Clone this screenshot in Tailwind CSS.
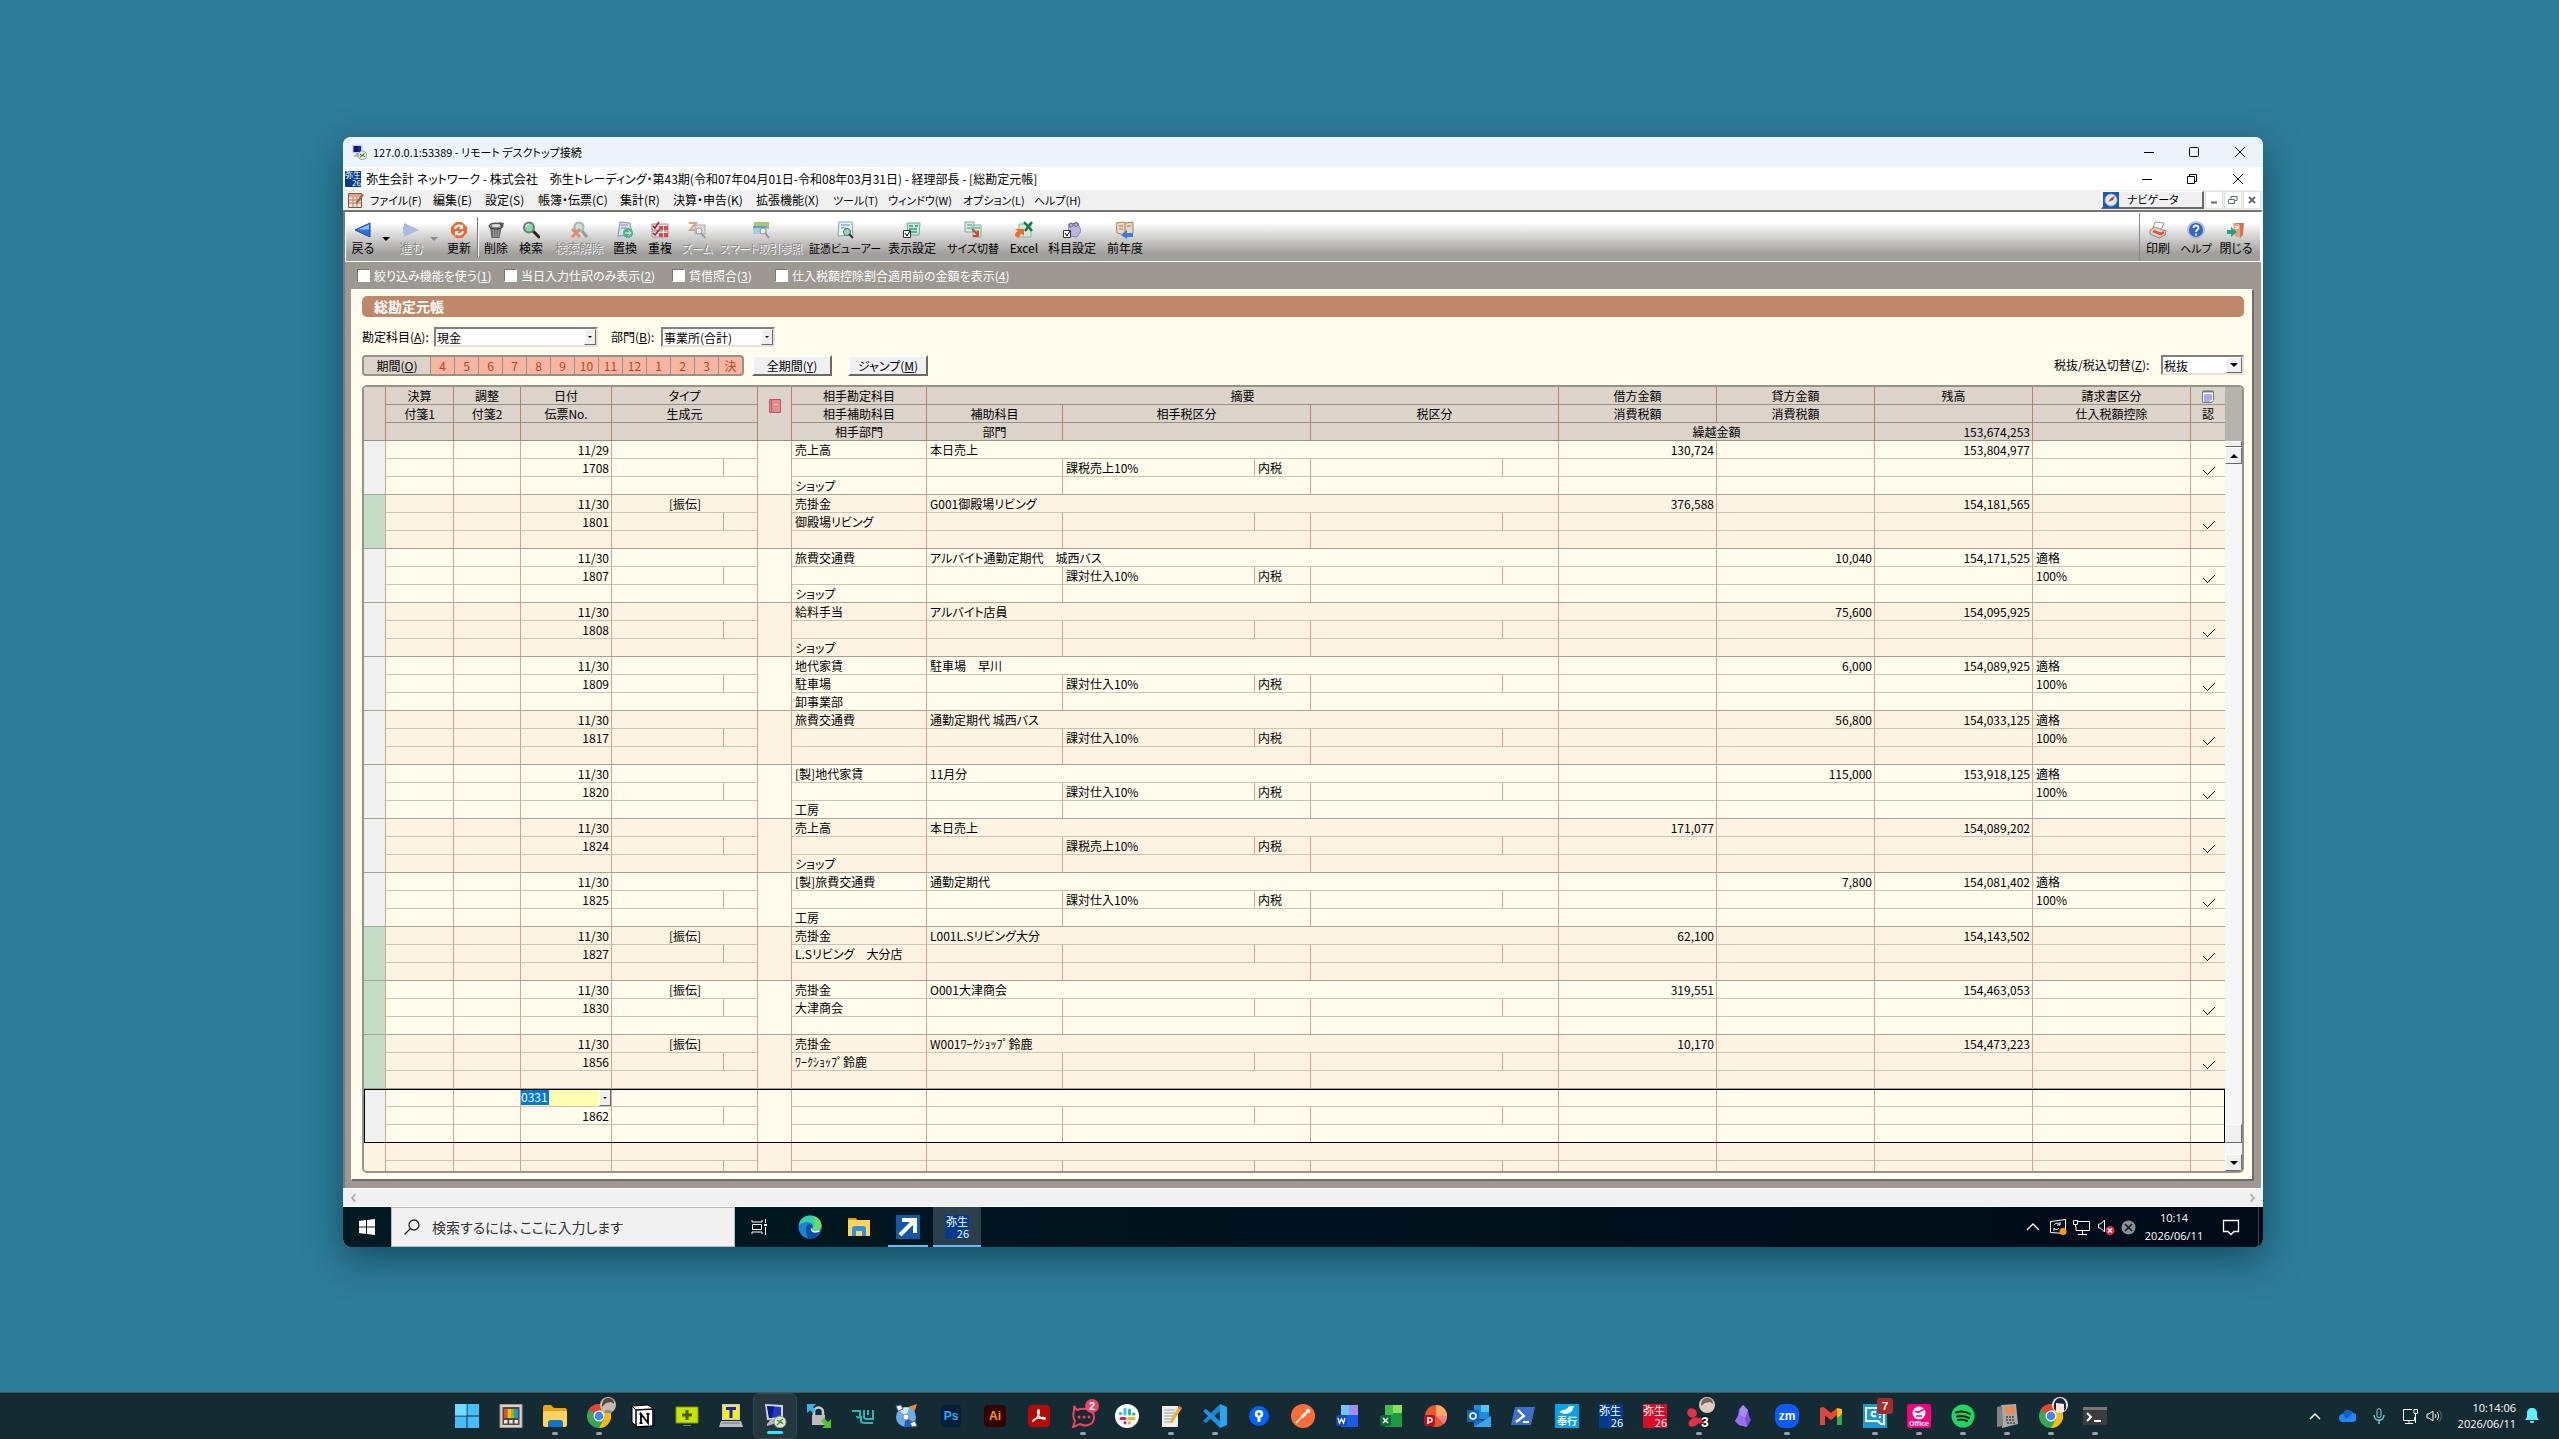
<!DOCTYPE html>
<html lang="ja">
<head>
    <meta charset="UTF-8">
    <meta name="viewport" content="width=device-width, initial-scale=1.0">
    <title>弥生会計 ネットワーク - 総勘定元帳</title>
    <script src="https://cdn.jsdelivr.net/npm/@tailwindcss/browser@4"></script>
</head>
<body class="relative min-h-screen overflow-hidden bg-[#2d7c99] font-['Noto_Sans_CJK_JP',sans-serif] text-[12px] text-black [font-feature-settings:'palt']">

    <!-- Ventana de escritorio remoto -->
    <main class="absolute top-[137px] left-[343px] right-[296px] flex flex-col overflow-hidden rounded-lg bg-[#f0f0f0] shadow-[0_12px_36px_rgba(0,30,45,0.5)]">

        <header class="flex h-[30px] items-center bg-[#ebf4fb] pl-2">
            <svg class="mr-1.5 size-4" viewBox="0 0 24 24"><path d="M2 1h15v13H2z" fill="#c9ccd4"/><path d="M4 3h11v9H4z" fill="#1526b4"/><path d="M4 3h5l3 9H4z" fill="#0a1680"/><path d="M7 14h6v3H7zM4 17h9v2H4z" fill="#a9adb5"/><circle cx="17" cy="17" r="6.500" fill="#e4ead9" stroke="#7d8a75"/><path d="M13.500 15l3 2.500-3 2.500M20.500 14l-3 2.500 3 2.500" fill="none" stroke="#2f9a33" stroke-width="1.700"/></svg>
            <h1 class="flex-1 text-[11px]">127.0.0.1:53389 - リモート デスクトップ接続</h1>
            <button class="flex w-[45px] justify-center" aria-label="最小化"><svg class="size-3" viewBox="0 0 12 12"><path d="M1 6.500h10" stroke="#000"/></svg></button>
            <button class="flex w-[45px] justify-center" aria-label="最大化"><svg class="size-3" viewBox="0 0 12 12"><rect x="1.500" y="1.500" width="9" height="9" rx="1" fill="none" stroke="#000"/></svg></button>
            <button class="flex w-[47px] justify-center" aria-label="閉じる"><svg class="size-3" viewBox="0 0 12 12"><path d="M1 1l10 10M11 1L1 11" stroke="#000"/></svg></button>
        </header>

        <div class="flex h-[23px] items-center bg-white pl-[2px]">
            <span class="mr-[5px] flex size-4 flex-col bg-[#003b8e] text-[8px] leading-[8px] text-white"><span>弥生</span><span class="self-end">26</span></span>
            <h2 class="flex-1">弥生会計 ネットワーク - 株式会社　弥生トレーディング・第43期(令和07年04月01日-令和08年03月31日) - 経理部長 - [総勘定元帳]</h2>
            <button class="flex w-[45px] justify-center" aria-label="最小化"><svg class="size-3" viewBox="0 0 12 12"><path d="M1 6.500h10" stroke="#000"/></svg></button>
            <button class="flex w-[45px] justify-center" aria-label="元に戻す"><svg class="size-3" viewBox="0 0 12 12"><path d="M1.500 3.500h7v7h-7zM3.500 3.500v-2h7v7h-2" fill="none" stroke="#000"/></svg></button>
            <button class="mr-[2px] flex w-[47px] justify-center" aria-label="閉じる"><svg class="size-3" viewBox="0 0 12 12"><path d="M1 1l10 10M11 1L1 11" stroke="#000"/></svg></button>
        </div>

        <div class="flex h-5 items-center pl-[5px]">
            <svg class="mr-[6px] size-4" viewBox="0 0 16 16"><path d="M.500 1.500h13v14H.500z" fill="#f8ded0" stroke="#6f5a50"/><path d="M1 2h12v3H1z" fill="#e2a58c"/><path d="M1 8h12M1 11h12M5 5v10M9 5v10" stroke="#c08070"/><path d="M8 10l6-8 2 1-6 8-2 1z" fill="#8c6a50"/></svg>
            <nav class="flex whitespace-nowrap">
                <button class="w-[63px] text-left text-[11px]">ファイル(F)</button>
                <button class="w-[52px] text-left">編集(E)</button>
                <button class="w-[53px] text-left">設定(S)</button>
                <button class="w-[82px] text-left">帳簿・伝票(C)</button>
                <button class="w-[53px] text-left">集計(R)</button>
                <button class="w-[83px] text-left">決算・申告(K)</button>
                <button class="w-[77px] text-left">拡張機能(X)</button>
                <button class="w-[55px] text-left text-[11px]">ツール(T)</button>
                <button class="w-[75px] text-left text-[11px]">ウィンドウ(W)</button>
                <button class="w-[71px] text-left text-[11px]">オプション(L)</button>
                <button class="text-left text-[11px]">ヘルプ(H)</button>
            </nav>
            <button class="ml-auto flex h-[18px] w-[103px] items-center border border-t-white border-r-2 border-b-2 border-l-white border-r-[#696969] border-b-[#696969] pl-px text-[11px]">
                <svg class="mr-2 size-4" viewBox="0 0 16 16"><path d="M0 0h16v16H0z" fill="#1f57b8"/><circle cx="8" cy="8" r="6" fill="#dfeefb" stroke="#8bb5e6"/><path d="M5 10l3-4 4-2-2 4z" fill="#d93025"/></svg>
                ナビゲータ
            </button>
            <button class="ml-px flex size-[18px] items-center justify-center border border-[#e0e0e0] bg-white" aria-label="最小化"><svg class="size-2" viewBox="0 0 8 8"><path d="M1 6.500h6" stroke="#5b6b7a" stroke-width="2"/></svg></button>
            <button class="ml-px flex size-[18px] items-center justify-center border border-[#e0e0e0] bg-white" aria-label="元に戻す"><svg class="size-2.5" viewBox="0 0 10 10"><path d="M.500 4.500h6v4h-6zM3 4V1.500h6v4H7" fill="none" stroke="#5b6b7a"/></svg></button>
            <button class="mr-[2px] ml-px flex size-[18px] items-center justify-center border border-[#e0e0e0] bg-white" aria-label="閉じる"><svg class="size-2" viewBox="0 0 8 8"><path d="M1 1l6 6M7 1L1 7" stroke="#5b6b7a" stroke-width="2"/></svg></button>
        </div>

        <div class="border-t-2 border-r-2 border-l-2 border-t-[#76746f] border-r-white border-l-[#7c7a76] bg-[#9d9992]">

            <!-- Barra de herramientas -->
            <div class="flex h-[50px] border border-white bg-linear-to-b from-white from-20% via-[#c5c4c3] via-60% to-[#a19f9c] to-85% pl-[3px] leading-[18px] whitespace-nowrap">
                <button class="flex w-7 flex-col items-center pt-2">
                    <svg class="size-[18px]" viewBox="0 0 18 18"><path d="M1 9l15-7v14z" fill="#2f6fe0" stroke="#1b46a0"/><path d="M4 8.500l11-5v5z" fill="#8ec0ff"/></svg>戻る</button>
                <button class="flex w-[18px] justify-center pt-6" aria-label="戻る履歴"><svg class="h-1 w-2" viewBox="0 0 8 4"><path d="M0 0h8L4 4z"/></svg></button>
                <button class="flex w-8 flex-col items-center pt-2 text-[#8c8a88] [text-shadow:1px_1px_0_#fff]">
                    <svg class="size-[18px]" viewBox="0 0 18 18"><path d="M17 9L2 2v3.500H1v7h1V16z" fill="#a9bbdf"/></svg>進む</button>
                <button class="flex w-[14px] justify-center pt-6" aria-label="進む履歴"><svg class="h-1 w-2" viewBox="0 0 8 4"><path d="M0 0h8L4 4z" fill="#8d8d8d"/></svg></button>
                <button class="flex w-9 flex-col items-center pt-2">
                    <svg class="size-[18px]" viewBox="0 0 18 18"><path d="M6 1h6l5 5v6l-5 5H6l-5-5V6z" fill="#ee6a35"/><path d="M5 8a4 4 0 017-2M13 10a4 4 0 01-7 2" fill="none" stroke="#fff" stroke-width="2"/><path d="M13 3v5H9zM5 15v-5h4z" fill="#fff"/></svg>更新</button>
                <span class="my-1 w-[2px] border-l border-[#777] bg-white"></span>
                <button class="flex w-[34px] flex-col items-center pt-2">
                    <svg class="size-[18px]" viewBox="0 0 18 18"><path d="M3 6l1.500 11h8L15 5z" fill="#666"/><path d="M6 8l1 8M9 8v8M12 8l-1 8" stroke="#aaa"/><ellipse cx="9" cy="5" rx="7" ry="3" fill="#888" stroke="#333"/><ellipse cx="9" cy="4.500" rx="4" ry="1.500" fill="#ddd"/><path d="M12 1l5 1-2 5z" fill="#555"/></svg>削除</button>
                <button class="flex w-9 flex-col items-center pt-2">
                    <svg class="size-[18px]" viewBox="0 0 18 18"><path d="M11 10l6 6" stroke="#222" stroke-width="3" stroke-linecap="round"/><circle cx="7" cy="6.500" r="5" fill="#7fd9a8" stroke="#6d7a76" stroke-width="2"/><path d="M4 6a3 3 0 013-3" stroke="#fff" fill="none"/></svg>検索</button>
                <button class="flex w-[60px] flex-col items-center pt-2 text-[#8c8a88] [text-shadow:1px_1px_0_#fff]">
                    <svg class="size-[18px]" viewBox="0 0 18 18"><path d="M12 10l5 6" stroke="#999" stroke-width="3"/><circle cx="9" cy="6" r="4.500" fill="#c7e2d3" stroke="#a9b3ad" stroke-width="2"/><path d="M2 8l8 8M10 8l-8 8" stroke="#e08a7c" stroke-width="3"/></svg>検索解除</button>
                <button class="flex w-8 flex-col items-center pt-2">
                    <svg class="size-[18px]" viewBox="0 0 18 18"><path d="M4 1l10 1 2 12-14 1z" fill="#dcdde8" stroke="#8c8ca0"/><path d="M5 4h7M5 7h6" stroke="#8c84c0"/><circle cx="12" cy="12" r="5" fill="#45b58a"/><path d="M9 12h6M12.500 9.500L15 12l-2.500 2.500" stroke="#fff" fill="none"/></svg>置換</button>
                <button class="flex w-[38px] flex-col items-center pt-2">
                    <svg class="size-[18px]" viewBox="0 0 18 18"><path d="M1 3h16v6H1zM1 10h16v6H1z" fill="#e5e5e5" stroke="#999"/><path d="M8 5h9v4H8zM8 12h9v4H8z" fill="#e0464a"/><path d="M12.500 4v12" stroke="#fff"/><path d="M2 5l2 2 4-6M2 12l2 2 4-5" fill="none" stroke="#b3121b" stroke-width="1.500"/></svg>重複</button>
                <button class="flex w-9 flex-col items-center pt-2 text-[11px] text-[#8c8a88] [text-shadow:1px_1px_0_#fff]">
                    <svg class="size-[18px]" viewBox="0 0 18 18"><path d="M1 2h7L2 9h6" stroke="#e0a08a" stroke-width="2" fill="none"/><path d="M7 4h10v9H7z" fill="#d5dde2" stroke="#aaa"/><circle cx="11" cy="10" r="3" fill="#eee" stroke="#999"/><path d="M13 12l4 5" stroke="#999" stroke-width="2"/></svg>ズーム</button>
                <button class="flex w-[92px] flex-col items-center pt-2 text-[11px] text-[#8c8a88] [text-shadow:1px_1px_0_#fff]">
                    <svg class="size-[18px]" viewBox="0 0 18 18"><path d="M2 1h15v7H2z" fill="#a4c77a"/><path d="M1 5h14v8H1z" fill="#a3cfe0"/><path d="M1 5h14v2H1z" fill="#6fa0bb"/><circle cx="11" cy="10" r="3" fill="#eee" stroke="#999"/><path d="M13 12l4 5" stroke="#a88" stroke-width="2"/></svg>スマート取引参照</button>
                <button class="flex w-[76px] flex-col items-center pt-2 text-[11px]">
                    <svg class="size-[18px]" viewBox="0 0 18 18"><path d="M3 1h13l1 13-15 1z" fill="#e8f1f6" stroke="#8aa0ae"/><path d="M5 4h9M5 7h5" stroke="#4b9ad0"/><circle cx="11" cy="11" r="3.500" fill="#8fe0b0" stroke="#667"/><path d="M13 13l4 4" stroke="#333" stroke-width="2"/></svg>証憑ビューアー</button>
                <button class="flex w-[58px] flex-col items-center pt-2">
                    <svg class="size-[18px]" viewBox="0 0 18 18"><path d="M4 2h13l-1 12H5z" fill="#c9e9dc" stroke="#7aa394"/><path d="M6 5h4M12 5h3M6 8h8M8 11h6" stroke="#2f9a74" stroke-width="1.500"/><path d="M.500 9.500h7v7h-7z" fill="#fff" stroke="#333"/><path d="M2 12l2 3 3-5" fill="none" stroke="#000"/></svg>表示設定</button>
                <button class="flex w-16 flex-col items-center pt-2 text-[11px]">
                    <svg class="size-[18px]" viewBox="0 0 18 18"><path d="M1 1h9v10H1zM9 4h8v12H9z" fill="#d4eee3" stroke="#86a99d"/><path d="M3 4h5M3 7h5M11 7h5M11 10h4" stroke="#2f9a74"/><path d="M8 8l6 6M14 10v5H9" stroke="#d8432f" stroke-width="2" fill="none"/></svg>サイズ切替</button>
                <button class="flex w-[38px] flex-col items-center pt-2">
                    <svg class="size-[18px]" viewBox="0 0 18 18"><path d="M4 3h12v13H4z" fill="#cfeadd" stroke="#8ab3a0"/><path d="M9 1l8 9M17 1l-7 9" stroke="#157a3e" stroke-width="2.500"/><path d="M0 8h9v7l-2-2c-2 0-3 2-3 4L0 15c0-3 1-4 3-5z" fill="#f06a2c" /></svg>Excel</button>
                <button class="flex w-[58px] flex-col items-center pt-2">
                    <svg class="size-[18px]" viewBox="0 0 18 18"><path d="M6 3l9-1 3 8-4 6-9-1z" fill="#b9b5dd" stroke="#8783b0"/><circle cx="8" cy="4" r="2" fill="none" stroke="#666"/><circle cx="13" cy="3.500" r="2" fill="none" stroke="#666"/><path d="M.500 9.500h7v7h-7z" fill="#fff" stroke="#333"/><path d="M2 12l2 3 3-5" fill="none" stroke="#000"/></svg>科目設定</button>
                <button class="flex w-12 flex-col items-center pt-2">
                    <svg class="size-[18px]" viewBox="0 0 18 18"><path d="M0 2l8-1 1 1 8-1v11l-8 2-8-2z" fill="#ead6bd" stroke="#9c8468"/><path d="M9 2v11M3 5h4M3 8h4M11 5h4" stroke="#9c8468"/><path d="M5 14l6-5v3h6v4h-6v2z" fill="#3d78dc"/></svg>前年度</button>
                <div class="ml-auto flex border-l border-[#888] pr-[4px]">
                    <button class="flex w-9 flex-col items-center pt-2">
                        <svg class="size-[18px]" viewBox="0 0 18 18"><path d="M6 1l9 1-3 7-8-2z" fill="#fff" stroke="#999"/><path d="M1 9l5-3 11 4-1 4-6 3-9-4z" fill="#d8d4d0" stroke="#8a8580"/><path d="M4 10l8 3 3-2" stroke="#e2532f" stroke-width="2.500" fill="none"/></svg>印刷</button>
                    <button class="flex w-10 flex-col items-center pt-2 text-[11px]">
                        <svg class="size-[18px]" viewBox="0 0 18 18"><circle cx="9" cy="9" r="8" fill="#3565d2" stroke="#b9bfcc" stroke-width="2"/><path d="M6.500 7a2.500 2.500 0 115 0c0 1.500-2.500 2-2.500 4M9 12.500v2" fill="none" stroke="#fff" stroke-width="1.800"/></svg>ヘルプ</button>
                    <button class="flex w-10 flex-col items-center pt-2">
                        <svg class="size-[18px]" viewBox="0 0 18 18"><path d="M6 2h11l-1 12-3 3V4z" fill="#c97a55"/><path d="M6 2l7 2v13l-5-2z" fill="#e3a481"/><path d="M8 5h4v3H8z" fill="#f5e5d0"/><path d="M0 9h4V6l6 5-6 5v-3H0z" fill="#2aa08c"/></svg>閉じる</button>
                </div>
            </div>

            <!-- Opciones -->
            <div class="flex h-[27px] items-center pl-3 whitespace-nowrap text-white">
                <label class="flex w-[147px] items-center gap-1"><input type="checkbox" class="size-[13px] appearance-none border border-[#777] border-r-white border-b-white bg-white"><span>絞り込み機能を使う(<u>1</u>)</span></label>
                <label class="flex w-[168px] items-center gap-1"><input type="checkbox" class="size-[13px] appearance-none border border-[#777] border-r-white border-b-white bg-white"><span>当日入力仕訳のみ表示(<u>2</u>)</span></label>
                <label class="flex w-[103px] items-center gap-1"><input type="checkbox" class="size-[13px] appearance-none border border-[#777] border-r-white border-b-white bg-white"><span>貸借照合(<u>3</u>)</span></label>
                <label class="flex items-center gap-1"><input type="checkbox" class="size-[13px] appearance-none border border-[#777] border-r-white border-b-white bg-white"><span>仕入税額控除割合適用前の金額を表示(<u>4</u>)</span></label>
            </div>

            <section class="mr-[7px] mb-[7px] ml-[6px] border border-t-white border-r-2 border-b-2 border-l-white border-r-[#6d6c6a] border-b-[#6d6c6a] bg-[#fffcee] pt-[6px] pr-2 pb-[6px] pl-[10px]">
                <h3 class="h-[21px] rounded-[5px] bg-[#c0886a] pl-3 text-[14px] leading-[20px] font-bold text-white">総勘定元帳</h3>

                <div class="mt-[10px] flex h-5 items-center whitespace-nowrap">
                    <label for="kamoku" class="w-[72px]">勘定科目(<u>A</u>):</label>
                    <div class="relative w-[164px]">
                        <select id="kamoku" class="block h-5 w-full appearance-none border-2 border-[#e5e3dc] border-t-[#808080] border-l-[#808080] bg-white pl-px leading-[15px]"><option>現金</option></select>
                        <span class="pointer-events-none absolute inset-y-[2px] right-[2px] flex w-3 items-center justify-center border border-r-[#696969] border-b-[#696969] border-t-white border-l-white bg-[#f0f0f0]"><svg class="h-[2px] w-1" viewBox="0 0 4 2"><path d="M0 0h4L2 2z"/></svg></span>
                    </div>
                    <label for="bumon" class="ml-[13px] w-[50px]">部門(<u>B</u>):</label>
                    <div class="relative w-[114px]">
                        <select id="bumon" class="block h-5 w-full appearance-none border-2 border-[#e5e3dc] border-t-[#808080] border-l-[#808080] bg-white pl-px leading-[15px]"><option>事業所(合計)</option></select>
                        <span class="pointer-events-none absolute inset-y-[2px] right-[2px] flex w-3 items-center justify-center border border-r-[#696969] border-b-[#696969] border-t-white border-l-white bg-[#f0f0f0]"><svg class="h-[2px] w-1" viewBox="0 0 4 2"><path d="M0 0h4L2 2z"/></svg></span>
                    </div>
                </div>

                <div class="mt-2 flex h-[21px] items-stretch whitespace-nowrap">
                    <div id="months" class="flex overflow-hidden rounded-[4px] border-2 border-[#96928a] bg-[#f8b5a1] text-[#b0492c]">
                        <button class="w-[66px] bg-[#dcd4cb] text-black">期間(<u>O</u>)</button>
                    </div>
                    <button class="ml-2 w-20 border-2 border-t-white border-r-[#696969] border-b-[#696969] border-l-white bg-[#f0f0f0] leading-[16px]">全期間(<u>Y</u>)</button>
                    <button class="ml-4 w-20 border-2 border-t-white border-r-[#696969] border-b-[#696969] border-l-white bg-[#f0f0f0] leading-[16px]">ジャンプ(<u>M</u>)</button>
                    <label for="zei" class="ml-auto w-[107px] leading-5">税抜/税込切替(<u>Z</u>):</label>
                    <div class="relative w-[83px]">
                        <select id="zei" class="block h-5 w-full appearance-none border-2 border-[#e5e3dc] border-t-[#808080] border-l-[#808080] bg-white pl-px leading-[15px]"><option>税抜</option></select>
                        <span class="pointer-events-none absolute top-[2px] right-[2px] flex h-4 w-4 items-center justify-center border border-r-[#696969] border-b-[#696969] border-t-white border-l-white bg-[#f0f0f0]"><svg class="h-1 w-2" viewBox="0 0 8 4"><path d="M0 0h8L4 4z"/></svg></span>
                    </div>
                </div>

                <!-- Libro mayor -->
                <div class="mt-[9px] flex overflow-hidden rounded-[5px] border-2 border-[#96928a]">
                    <table class="w-full flex-1 table-fixed border-separate border-spacing-0 whitespace-nowrap">
                        <colgroup>
                            <col class="w-[22px]"><col class="w-[68px]"><col class="w-[67px]"><col class="w-[91px]"><col class="w-[112px]"><col class="w-[34px]"><col class="w-[34px]">
                            <col class="w-[135px]"><col class="w-[136px]"><col><col class="w-[56px]"><col class="w-[192px]"><col class="w-[56px]">
                            <col class="w-[158px]"><col class="w-[158px]"><col class="w-[158px]"><col class="w-[158px]"><col class="w-[34px]">
                        </colgroup>
                        <thead class="bg-[#dcd4cb] [&_th]:h-[18px] [&_th]:border-r [&_th]:border-b [&_th]:border-r-[#ba8070] [&_th]:border-b-[#96928a] [&_th]:p-0 [&_th]:leading-[17px] [&_th]:font-normal [&_th:last-child]:border-r-0">
                            <tr>
                                <th rowspan="3"></th><th>決算</th><th>調整</th><th>日付</th><th colspan="2">タイプ</th>
                                <th rowspan="3"><svg class="mx-auto mb-4 h-[14px] w-3" viewBox="0 0 12 14"><path d="M.500.500h11v13H.500z" fill="#e58a94" stroke="#b05a68"/><path d="M2.500 1v12" stroke="#b05a68"/><path d="M5 5l1 1 1-1 1 1 1-1" stroke="#ffe14a" fill="none"/></svg></th>
                                <th>相手勘定科目</th><th colspan="5">摘要</th><th>借方金額</th><th>貸方金額</th><th>残高</th><th>請求書区分</th>
                                <th><svg class="mx-auto h-[14px] w-3" viewBox="0 0 12 14"><path d="M.500 2.500h11v9l-2 2h-9z" fill="#fff" stroke="#777"/><path d="M2 1v3M4 1v3M6 1v3M8 1v3M10 1v3" stroke="#777"/><path d="M2 6h8M2 8h8M2 10h8M2 12h6" stroke="#5c50e0"/></svg></th>
                            </tr>
                            <tr>
                                <th>付箋1</th><th>付箋2</th><th>伝票No.</th><th colspan="2">生成元</th>
                                <th>相手補助科目</th><th>補助科目</th><th colspan="2">相手税区分</th><th colspan="2">税区分</th><th>消費税額</th><th>消費税額</th><th></th><th>仕入税額控除</th><th>認</th>
                            </tr>
                            <tr>
                                <th></th><th></th><th></th><th colspan="2"></th>
                                <th>相手部門</th><th>部門</th><th colspan="2"></th><th colspan="2"></th><th colspan="2">繰越金額</th><th class="pr-[2px]! text-right">153,674,253</th><th></th><th></th>
                            </tr>
                        </thead>
                    </table>
                    <!-- Barra de desplazamiento vertical -->
                    <div class="flex w-[17px] flex-col bg-[#f6f6f6]">
                        <div class="h-[54px] bg-[#b6b2ad]"></div>
                        <div class="h-[6px] border border-t-white border-r-[#696969] border-b-[#696969] border-l-white bg-[#f0f0f0]"></div>
                        <button class="flex h-[17px] items-center justify-center border border-t-white border-r-[#696969] border-b-[#696969] border-l-white bg-[#f0f0f0]" aria-label="上へ"><svg class="h-1 w-2" viewBox="0 0 8 4"><path d="M0 4h8L4 0z"/></svg></button>
                        <div class="flex-1"></div>
                        <div class="mb-[11px] h-[19px] border border-t-white border-r-[#696969] border-b-[#696969] border-l-white bg-[#f0f0f0]"></div>
                        <button class="flex h-[17px] items-center justify-center border border-t-white border-r-[#696969] border-b-[#696969] border-l-white bg-[#f0f0f0]" aria-label="下へ"><svg class="h-1 w-2" viewBox="0 0 8 4"><path d="M0 0h8L4 4z"/></svg></button>
                    </div>
                </div>
            </section>
        </div>

        <!-- Desplazamiento horizontal -->
        <div class="flex h-[19px] items-center justify-between border-y border-white px-[7px]">
            <svg class="size-2" viewBox="0 0 8 8"><path d="M5.500 0L2 4l3.500 4" fill="none" stroke="#b5b5b5" stroke-width="2"/></svg>
            <svg class="size-2" viewBox="0 0 8 8"><path d="M2.500 0L6 4 2.500 8" fill="none" stroke="#b5b5b5" stroke-width="2"/></svg>
        </div>

        <!-- Barra de tareas remota -->
        <footer class="flex h-10 items-stretch bg-linear-to-r from-[#001a22] to-[#000b18]">
            <button class="flex w-12 items-center justify-center" aria-label="スタート"><svg class="size-4" viewBox="0 0 16 16"><path d="M0 2l7-1v6.500H0zM8 1l8-1v7.500H8zM0 8.500h7V15l-7-1zM8 8.500h8V16l-8-1z" fill="#fff"/></svg></button>
            <label class="flex w-[344px] items-center gap-3 border border-[#bbb] bg-[#f1f1f1] pl-3">
                <svg class="size-4" viewBox="0 0 16 16"><circle cx="10" cy="6" r="5" fill="none" stroke="#222" stroke-width="1.300"/><path d="M6.500 9.500L.500 15.500" stroke="#222" stroke-width="1.300"/></svg>
                <input type="text" placeholder="検索するには、ここに入力します" class="w-[280px] text-[14px] outline-none placeholder:text-[#333]">
            </label>
            <button class="flex w-12 items-center justify-center" aria-label="タスク ビュー"><svg class="size-4" viewBox="0 0 16 16"><path d="M1 1v2h10V1M1 15v-2h10v2M1.500 5.500h9v5h-9zM14.500 0v4M14.500 8v8" fill="none" stroke="#fff"/><path d="M13 5h3v2h-3z" fill="#fff"/></svg></button>
            <button class="flex w-[54px] items-center justify-center" aria-label="Edge"><svg class="size-6" viewBox="0 0 24 24"><circle cx="12" cy="12" r="11.500" fill="#1b84d3"/><path d="M1 10C2 3 8 0 13 .500c7 .500 10.500 6 10.500 10 0 4-3 5.500-6 5.500-3 0-4-1.500-3-3 1-2-.500-6-5-6-4 0-7 2-8.500 3z" fill="#39cfa4"/><path d="M15 1c5 1 8.500 5 8.500 9.500 0 4-3 5.500-6 5.500-2 0-3.500-1-3-2.500 3-3 3-8 .500-12.500z" fill="#63de63"/><path d="M8 15c0-4 2-6 4-6 3 0 3 3 2 4-1 2 1 4 4 4l4-1c-2 5-6 7.500-10 7.500-3 0-4-5-4-8.500z" fill="#0c4fa3"/><path d="M13.500 13.500c-.500 2 1.500 3.500 4 3.500l4-1" fill="none" stroke="#e8f6ff" stroke-width="1.500"/></svg></button>
            <button class="flex w-11 items-center justify-center" aria-label="エクスプローラー"><svg class="size-6" viewBox="0 0 24 24"><path d="M1 3h8l2 3H1z" fill="#e79b0e"/><path d="M1 5h22v16H1z" fill="#ffd35c"/><path d="M5 21v-7c0-2 1-3 3-3h8c2 0 3 1 3 3v7h-4v-5H9v5z" fill="#2f8fe0"/></svg></button>
            <button class="ml-[7px] flex w-10 flex-col items-center justify-end" aria-label="ランチャー"><svg class="mb-[6px] size-6" viewBox="0 0 24 24"><path d="M0 0h24v24H0z" fill="#1557a6"/><path d="M6 5h13v13M18 6L4 20" fill="none" stroke="#fff" stroke-width="4"/></svg><span class="h-[2px] w-full bg-[#6cb8f5]"></span></button>
            <button class="ml-[5px] flex w-12 flex-col items-center justify-end bg-[#2b404a]"><span class="mb-[6px] flex size-6 flex-col bg-[#003b8e] text-[11px] leading-[12px] text-white"><span>弥生</span><span class="self-end">26</span></span><span class="h-[2px] w-full bg-[#6cb8f5]"></span></button>

            <div class="ml-auto flex items-center text-white">
                <svg class="mr-2 h-3 w-4" viewBox="0 0 16 12"><path d="M2 9l6-6 6 6" fill="none" stroke="#fff" stroke-width="1.300"/></svg>
                <svg class="mr-[6px] size-[18px]" viewBox="0 0 18 18"><path d="M1.500 3.500l15-2v14l-15-1z" fill="none" stroke="#fff"/><path d="M5 7c1-2 5-3 6 0M11 4v3H8M10 10c-1 2-4 2-5 0v3" fill="none" stroke="#fff"/><circle cx="14" cy="13.500" r="3.500" fill="#ff9800"/></svg>
                <svg class="mr-[6px] size-[18px]" viewBox="0 0 18 18"><path d="M4 3.500h12.500v9H3v-4M9.500 13v3M5 16.500h9M.500 2.500h4v4h-4zM2.500 7v2" fill="none" stroke="#fff"/></svg>
                <svg class="mr-[6px] size-[18px]" viewBox="0 0 18 18"><path d="M1.500 6h2l4-4v12l-4-4h-2z" fill="none" stroke="#fff"/><circle cx="13" cy="12.500" r="4.500" fill="#d9303a"/><path d="M11 10.500l4 4M15 10.500l-4 4" stroke="#fff" stroke-width="1.300"/></svg>
                <svg class="mr-2 size-[15px]" viewBox="0 0 15 15"><circle cx="7.500" cy="7.500" r="7" fill="#8b9096"/><path d="M4 4l7 7M11 4l-7 7" stroke="#10161d" stroke-width="1.500"/></svg>
                <div class="w-[60px] text-center font-['Open_Sans'] text-[11px] leading-[18px]"><div>10:14</div><div>2026/06/11</div></div>
                <svg class="mx-[18px] size-[18px]" viewBox="0 0 18 18"><path d="M1.500 2.500h15v11H12l-3 3-3-3H1.500z" fill="none" stroke="#fff" stroke-width="1.300"/></svg>
                <span class="mr-1 h-10 w-px bg-[#3b4650]"></span>
            </div>
        </footer>
    </main>

    <!-- Barra de tareas local -->
    <footer class="absolute inset-x-0 bottom-0 flex h-[47px] items-center border-t border-[#41565e] bg-[#152b34]">
        <div class="ml-[445px] flex [&>button]:relative [&>button]:flex [&>button]:h-[46px] [&>button]:w-[44px] [&>button]:items-center [&>button]:justify-center [&>button]:text-white [&>button>i]:absolute [&>button>i]:bottom-[4px] [&>button>i]:h-[3px] [&>button>i]:w-[6px] [&>button>i]:rounded-full [&>button>i]:bg-[#9aa4a8] [&>button>svg]:size-6">
            <button aria-label="スタート"><svg viewBox="0 0 24 24"><path d="M0 0h11.500v11.500H0zM12.500 0H24v11.500H12.500zM0 12.500h11.500V24H0zM12.500 12.500H24V24H12.500z" fill="#45bdfa"/><path d="M0 0h11.500v11.500H0z" fill="#6fdcff"/></svg></button>
            <button aria-label="PowerToys"><svg viewBox="0 0 24 24"><path d="M1 .500h22v23H1z" fill="#d9d2c6" stroke="#a29b90"/><path d="M3.500 3h17v18h-17z" fill="#4d4a45"/><path d="M5 5h3.500v9H5z" fill="#f04a24"/><path d="M8.500 5H12v9H8.500z" fill="#fbbc10"/><path d="M12 5h3.500v9H12z" fill="#7bc618"/><path d="M15.500 5H19v9h-3.500z" fill="#2295e8"/><path d="M5 16h3.500v3.500H5zM10.200 16h3.500v3.500h-3.500zM15.500 16H19v3.500h-3.500z" fill="#e9e5dc"/></svg></button>
            <button aria-label="エクスプローラー"><svg viewBox="0 0 24 24"><path d="M0 3c0-1 1-2 2-2h6l3 3h11c1 0 2 1 2 2v3H0z" fill="#e5a21b"/><path d="M0 8l2-1h20c1 0 2 0 2 2v12c0 1-1 2-2 2H2c-1 0-2-1-2-2z" fill="#ffd45e"/><path d="M5 23v-4c0-2 1-3 3-3h9c2 0 3 1 3 3v4z" fill="#1273c4"/></svg><i></i></button>
            <button aria-label="Chrome"><svg viewBox="0 0 24 24"><circle cx="12" cy="12" r="12" fill="#34a853"/><path d="M12 12L1.600 6A12 12 0 0122.400 6z" fill="#ea4335"/><path d="M12 6h10.400A12 12 0 0112 24l5-9z" fill="#fbbc05"/><circle cx="12" cy="12" r="5.500" fill="#fff"/><circle cx="12" cy="12" r="4.300" fill="#4285f4"/></svg><svg class="absolute top-[4px] left-[23px] size-4!" viewBox="0 0 16 16"><circle cx="8" cy="8" r="8" fill="#c9b8ae"/><path d="M2 10c0-6 2-9 6-9s6 2 6 6l-3-2-5 1z" fill="#54483f"/><path d="M4 16c0-4 8-4 8 0z" fill="#888"/></svg><i></i></button>
            <button aria-label="Notion"><svg viewBox="0 0 24 24"><path d="M1 2l16-1 6 4v17l-17 1-5-5z" fill="#fff" stroke="#000"/><path d="M5 6l17-1v17L5 23z" fill="#fff" stroke="#000" stroke-width="1.500"/><path d="M1 2l4 4" stroke="#000"/><path d="M10 19V10l7 9V10M8.500 10H11M15.500 10h3M8.500 19h3" fill="none" stroke="#000" stroke-width="1.800"/></svg></button>
            <button aria-label="モニター"><svg viewBox="0 0 24 24"><path d="M1 3h22v16H1z" fill="#c6e600" stroke="#81950f"/><path d="M12 6v10M7 11h10" stroke="#4d5a00" stroke-width="3"/><path d="M8 21h8v1H8z" fill="#777"/></svg></button>
            <button aria-label="Tera Term"><svg viewBox="0 0 24 24"><path d="M3 0h18v16H3z" fill="#ccc"/><path d="M4.500 1.500h15v13h-15z" fill="#fff200"/><path d="M7 3h10v3h-3.500v8h-3V6H7z" fill="#1420c8"/><path d="M2 17h20l2 6H0z" fill="#b9bbbd"/><path d="M3 19h18" stroke="#777"/></svg></button>
            <button class="rounded-md border border-[#33474f] bg-[#24373f]" aria-label="リモート デスクトップ"><svg viewBox="0 0 24 24"><path d="M2 0l18 1v14L4 16z" fill="#d0d3da"/><path d="M4 2l14 1v10L6 14z" fill="#2437c4"/><path d="M4 2l7 .500L9 14H6z" fill="#0f1a8c"/><path d="M8 15h6v4l-10 3v-2z" fill="#b3b7bd"/><circle cx="17" cy="18" r="6" fill="#dfe7d2" stroke="#8b957f"/><path d="M14 16l3 2-3 3M20 15l-3 2 3 3" fill="none" stroke="#2f9a33" stroke-width="1.300"/></svg><i class="w-4! bg-[#2ee6ff]!"></i></button>
            <button aria-label="WinSCP"><svg viewBox="0 0 24 24"><path d="M7 11V8a4.500 4.500 0 019 0v3" fill="none" stroke="#ccc" stroke-width="2.500"/><path d="M5 11h13v10H5z" fill="#b9bdc1"/><path d="M0 0h9L6 3l3 3-3 3-3-3-3 3z" fill="#35b4e8"/><path d="M24 24h-9l3-3-4-4 3-3 4 4 3-3z" fill="#55c22c"/></svg></button>
            <button aria-label="ウィジェット"><svg viewBox="0 0 24 24"><path d="M1 7h8v5c0 2-3 2-3 0M13 6v7c0 2 2 2 3 2h6V6M17 6v5M10 12v5c0 2 3 2 4 2h8" fill="none" stroke="#2cb5b5" stroke-width="2"/></svg></button>
            <button aria-label="ディスク"><svg viewBox="0 0 24 24"><path d="M10 4L22 0l-3 9z" fill="#f08a1c"/><circle cx="11" cy="13" r="10" fill="#68aef0"/><path d="M11 13L4 6a10 10 0 0110-2z" fill="#cde8ff"/><path d="M11 13l8 6a10 10 0 01-10 4z" fill="#2460c8"/><circle cx="11" cy="13" r="3" fill="#fff" stroke="#888"/><path d="M1 2l5-1 2 4-5 2zM15 19l5-2 2 5-5 1z" fill="#e8eef5" stroke="#567"/></svg></button>
            <button><span class="flex h-[22px] w-5 items-center justify-center rounded-[4px] bg-[#001e36] text-[12px] font-bold text-[#31a8ff] font-['Liberation_Sans']">Ps</span></button>
            <button><span class="flex size-[22px] items-center justify-center rounded-[4px] bg-[#330000] text-[12px] font-bold text-[#ff9a00] font-['Liberation_Sans']">Ai</span></button>
            <button aria-label="Acrobat"><svg viewBox="0 0 24 24"><rect x="1" y="1" width="22" height="22" rx="4" fill="#b30b00"/><path d="M6 17c5-3 7-8 6-11-1-1-2 1-1 4 1 3 4 5 7 5 1-1-2-2-5-1-3 0-7 1-7 3z" fill="none" stroke="#fff" stroke-width="1.500"/></svg></button>
            <button aria-label="チャット"><svg viewBox="0 0 24 24"><path d="M3 2l3 4c8-3 17 0 17 7 0 8-8 10-14 7l-7 3 2-6C0 12 4 8 3 2z" fill="none" stroke="#ee4460" stroke-width="2"/><circle cx="8" cy="13" r="1.500" fill="#ee4460"/><circle cx="13" cy="13" r="1.500" fill="#ee4460"/><circle cx="18" cy="13" r="1.500" fill="#ee4460"/></svg><span class="absolute top-[6px] left-[24px] flex size-[14px] items-center justify-center rounded-full bg-[#ee4460] text-[11px] font-bold font-['Liberation_Sans']">2</span><i></i></button>
            <button aria-label="Slack"><svg viewBox="0 0 24 24"><circle cx="12" cy="12" r="12" fill="#fff"/><g stroke-width="3" stroke-linecap="round"><path d="M10 5v5M5 9.500h1" stroke="#36c5f0"/><path d="M14.500 6v4M18.500 10h.500" stroke="#2eb67d"/><path d="M6 14.500h4M10 18.500v.500" stroke="#e01e5a"/><path d="M14 14.500h5M14.500 18.500v.500" stroke="#ecb22e"/></g></svg></button>
            <button aria-label="エディター"><svg viewBox="0 0 24 24"><path d="M3 2h16v21H3z" fill="#f1f1ef"/><path d="M5 6h11M5 9h11M5 12h10M5 15h10M5 18h9" stroke="#999"/><path d="M20 2l3 2-9 14-3 1 1-4z" fill="#f0b22c"/><path d="M20 2l3 2-1 2-3-2z" fill="#e26060"/></svg><i></i></button>
            <button aria-label="Visual Studio Code"><svg viewBox="0 0 24 24"><path d="M17 0l7 3v18l-7 3z" fill="#2aa3ee"/><path d="M17 0v7L3 19 0 17z" fill="#1a86d0"/><path d="M17 24v-7L3 5 0 7z" fill="#1e93e0"/></svg><i></i></button>
            <button aria-label="ピン"><svg viewBox="0 0 24 24"><circle cx="12" cy="12" r="10" fill="#0062ff"/><path d="M12 6a4 4 0 00-1.500 7.800V18h3v-4.200A4 4 0 0012 6z" fill="#fff"/><circle cx="12" cy="10" r="1.500" fill="#0062ff"/></svg></button>
            <button aria-label="Postman"><svg viewBox="0 0 24 24"><circle cx="12" cy="12" r="12" fill="#ff6c37"/><path d="M5 19l9-9" stroke="#fff" stroke-width="1.500"/><path d="M10 12l4-4 2 2-4 4z" fill="#fff"/><circle cx="17" cy="7" r="2.300" fill="#fff"/></svg></button>
            <button aria-label="Word"><svg viewBox="0 0 24 24"><path d="M6 1h17v22H6z" fill="#1a5be8"/><path d="M6 1h17v10H6z" fill="#6ec5f8"/><path d="M14 1h9v10h-9z" fill="#a98af0"/><rect x="1" y="11" width="11" height="11" rx="2" fill="#1b48b4"/><path d="M3 14l1.500 5 2-4 2 4 1.500-5" fill="none" stroke="#fff" stroke-width="1.300"/></svg></button>
            <button aria-label="Excel"><svg viewBox="0 0 24 24"><path d="M6 1h17v22H6z" fill="#1f9a42"/><path d="M6 1h8v10H6z" fill="#3fbf4f"/><path d="M14 1h9v8h-9z" fill="#90dd5a"/><rect x="1" y="11" width="11" height="11" rx="2" fill="#0f6b35"/><path d="M4 14l5 5M9 14l-5 5" stroke="#fff" stroke-width="1.500"/></svg></button>
            <button aria-label="PowerPoint"><svg viewBox="0 0 24 24"><circle cx="13" cy="12" r="11" fill="#e8552f"/><path d="M13 1a11 11 0 0111 11H13z" fill="#ffab66"/><path d="M13 12l8 8a11 11 0 003-8z" fill="#f7808a"/><rect x="1" y="11" width="11" height="11" rx="2" fill="#b5121e"/><path d="M5 20v-6h2a2 2 0 010 4H5" fill="none" stroke="#fff" stroke-width="1.500"/></svg></button>
            <button aria-label="Outlook"><svg viewBox="0 0 24 24"><path d="M7 1h15v14H7z" fill="#1f8ae0"/><path d="M14 1h8v7h-8z" fill="#50c8f5"/><path d="M7 12l8 5 9-5v11H7z" fill="#1672c8"/><path d="M7 23l17-11v11z" fill="#39a5ec"/><path d="M0 6h12v12H0z" fill="#0f63b8"/><circle cx="6" cy="12" r="3" fill="none" stroke="#fff" stroke-width="1.600"/></svg></button>
            <button aria-label="PowerShell"><svg viewBox="0 0 24 24"><path d="M4 3h20l-4 18H0z" fill="#3d6fcb"/><path d="M7 6l6 6-8 6M12 18h6" fill="none" stroke="#fff" stroke-width="2.200"/></svg></button>
            <button><span class="flex size-6 flex-col items-center bg-[#00a3ea] text-[10px] leading-[14px] font-bold"><svg class="h-[10px] w-5" viewBox="0 0 20 12"><path d="M1 10c3-5 8-1 11-7l4-1 3 1-2 2c0 5-6 7-10 7z" fill="#fff"/></svg>奉行</span></button>
            <button><span class="flex size-6 flex-col items-start bg-[#003b8e] text-[11px] leading-[12px]"><span>弥生</span><span class="self-end">26</span></span></button>
            <button><span class="flex size-6 flex-col items-start bg-[#d80c2c] text-[11px] leading-[12px]"><span>弥生</span><span class="self-end">26</span></span></button>
            <button><svg viewBox="0 0 24 24"><ellipse cx="5" cy="9" rx="5" ry="4.500" fill="#e62e44" transform="rotate(35 5 9)"/><ellipse cx="7" cy="18" rx="6" ry="4" fill="#e62e44" transform="rotate(-35 7 18)"/><ellipse cx="16" cy="17" rx="5" ry="4" fill="#e62e44"/></svg><svg class="absolute top-[4px] left-[22px] size-4!" viewBox="0 0 16 16"><circle cx="8" cy="8" r="8" fill="#dccdbf"/><path d="M2 9c0-5 2-8 6-8s6 2 6 6l-3-2-5 1z" fill="#74665c"/></svg><span class="absolute top-[22px] left-[24px] text-[14px] leading-[14px] font-bold font-['Liberation_Sans'] [text-shadow:1px_1px_1px_#000,-1px_-1px_1px_#000]">3</span><i></i></button>
            <button aria-label="Obsidian"><svg viewBox="0 0 24 24"><path d="M12 1l5 5 1 6 2 4-4 7-8-2-4-4 3-6 1-6z" fill="#7c4fe0"/><path d="M12 1l5 5-3 8-6-3 1-6z" fill="#a98bf5"/><path d="M8 11l6 3 2 9-8-2-4-4z" fill="#9a70ee"/></svg></button>
            <button><span class="flex h-6 w-6 items-center justify-center rounded-[9px] bg-[#0b5cff] text-[12px] leading-3 font-bold font-['Liberation_Sans']">zm</span><i></i></button>
            <button aria-label="Gmail"><svg viewBox="0 0 24 24"><path d="M1 5h5v16H1z" fill="#4285f4"/><path d="M18 5h5v16h-5z" fill="#34a853"/><path d="M18 4l5 1v5l-5 4z" fill="#fbbc04"/><path d="M1 5c0-2 3-3 5-1l6 5 6-5v7l-6 5-11-8z" fill="#ea4335"/><path d="M1 5h5v16H1z" fill="#d84a42"/></svg></button>
            <button aria-label="チャット"><svg viewBox="0 0 24 24"><path d="M0 0h24v24H0z" fill="#189bd6"/><path d="M3 4h18v16h-3l-3-3H3z" fill="none" stroke="#fff" stroke-width="2"/><path d="M13 8c-6-2-6 6 0 4M17 7v4M17 12v2" fill="none" stroke="#fff" stroke-width="2"/></svg><span class="absolute top-[5px] left-[24px] flex size-4 items-center justify-center rounded-[3px] bg-[#a62b2b] text-[11px] font-bold font-['Liberation_Sans']">7</span><i></i></button>
            <button><span class="flex size-6 flex-col items-center justify-end rounded-[2px] bg-[#f4007f] text-[7px] leading-[8px] font-bold font-['Liberation_Sans']"><svg class="size-3.5" viewBox="0 0 14 14"><circle cx="7" cy="7" r="6.500" fill="#fff"/><path d="M3 5c3 3 6 0 9-2M4 10h6" stroke="#f4007f" stroke-width="1.500" fill="none"/></svg>Office</span><i></i></button>
            <button aria-label="Spotify"><svg viewBox="0 0 24 24"><circle cx="12" cy="12" r="11.500" fill="#1ed760"/><path d="M5 8.500c5-1.500 10-1 14 1.500M6 12.500c4-1 8-.500 12 1.500M7 16c3-1 6-.500 9 1" fill="none" stroke="#0c1a12" stroke-width="2" stroke-linecap="round"/></svg><i></i></button>
            <button aria-label="電話"><svg viewBox="0 0 24 24"><path d="M6 1l15-1 2 20-16 4z" fill="#aaa9a5"/><path d="M2 3l5-1 1 20-6 1z" fill="#85837e"/><path d="M10 3l9-1 1 7-9 1z" fill="#f0894a"/><path d="M11 13h9M11 16h9M12 19h8" stroke="#444" stroke-dasharray="2 1" stroke-width="1.500"/></svg><i></i></button>
            <button aria-label="Chrome"><svg viewBox="0 0 24 24"><circle cx="12" cy="12" r="12" fill="#34a853"/><path d="M12 12L1.600 6A12 12 0 0122.400 6z" fill="#ea4335"/><path d="M12 6h10.400A12 12 0 0112 24l5-9z" fill="#fbbc05"/><circle cx="12" cy="12" r="5.500" fill="#fff"/><circle cx="12" cy="12" r="4.300" fill="#4285f4"/></svg><svg class="absolute top-[4px] left-[23px] size-4!" viewBox="0 0 16 16"><circle cx="8" cy="8" r="8" fill="#e9eef5"/><path d="M2 12C1 5 4 1 8 1s7 4 6 11l-2 2V7L4 6v8z" fill="#1d2536"/><path d="M4 7l8 1v4c-2 3-6 3-8 0z" fill="#fbe3d6"/></svg><i></i></button>
            <button aria-label="ターミナル"><svg viewBox="0 0 24 24"><path d="M0 3h24v18H0z" fill="#3c3c3c"/><path d="M0 3h24v3H0z" fill="#777"/><path d="M4 9l4 4-4 4M11 17h7" fill="none" stroke="#fff" stroke-width="2"/></svg><i></i></button>
        </div>
        <div class="mr-5 ml-auto flex items-center text-white">
            <svg class="mr-[18px] size-3" viewBox="0 0 12 12"><path d="M1 9l5-5 5 5" fill="none" stroke="#fff" stroke-width="1.500"/></svg>
            <svg class="mr-[17px] h-3 w-[17px]" viewBox="0 0 17 12"><path d="M4 12a4 4 0 010-8 5.500 5.500 0 0110-1 4.500 4.500 0 010 9z" fill="#1e87f0"/><path d="M4 4a5.500 5.500 0 0110-1L7 9z" fill="#1261c9"/></svg>
            <svg class="mr-[17px] h-4 w-3" viewBox="0 0 12 16"><rect x="4" y=".7" width="4" height="9" rx="2" fill="none" stroke="#7fe3e6"/><path d="M1 7c0 7 10 7 10 0M6 12v4" fill="none" stroke="#7fe3e6" stroke-width="1.300"/></svg>
            <svg class="mr-2 size-4" viewBox="0 0 16 16"><path d="M10 1.500H1.500v11h11V9M7 13v2.500M3 15.500h8M12 1.500h3.500v4H12zM13.500 6v9" fill="none" stroke="#fff"/></svg>
            <svg class="mr-4 size-4" viewBox="0 0 16 16"><path d="M1 6h2l4-3v10l-4-3H1zM9 6c1 1 1 3 0 4M11 4c2 2 2 6 0 8" fill="none" stroke="#fff"/><path d="M13 2c3 3 3 9 0 12" fill="none" stroke="#5d6d74"/></svg>
            <div class="mr-[9px] text-right font-['Open_Sans'] text-[11px] leading-4"><div>10:14:06</div><div>2026/06/11</div></div>
            <svg class="h-4 w-[14px]" viewBox="0 0 14 16"><path d="M7 0c3 0 5 2 5 5v4l2 3H0l2-3V5c0-3 2-5 5-5zM5 13h4c0 3-4 3-4 0z" fill="#5ff0ff"/></svg>
        </div>
    </footer>

    <script>
        // Meses del periodo contable
        const months = document.getElementById('months');
        ['4', '5', '6', '7', '8', '9', '10', '11', '12', '1', '2', '3', '決'].forEach(m => {
            const b = document.createElement('button');
            b.className = 'w-6 border-l border-[#96928a]';
            b.textContent = m;
            months.appendChild(b);
        });

        // fecha, nº, tipo, cuenta, subcuenta, departamento, concepto, impuesto, debe, haber, saldo, factura
        const rows = [
            ['11/29', '1708', '', '売上高', '', 'ショップ', '本日売上', '課税売上10%', '130,724', '', '153,804,977', ''],
            ['11/30', '1801', '[振伝]', '売掛金', '御殿場リビング', '', 'G001御殿場リビング', '', '376,588', '', '154,181,565', ''],
            ['11/30', '1807', '', '旅費交通費', '', 'ショップ', 'アルバイト通勤定期代　城西バス', '課対仕入10%', '', '10,040', '154,171,525', '適格'],
            ['11/30', '1808', '', '給料手当', '', 'ショップ', 'アルバイト店員', '', '', '75,600', '154,095,925', ''],
            ['11/30', '1809', '', '地代家賃', '駐車場', '卸事業部', '駐車場　早川', '課対仕入10%', '', '6,000', '154,089,925', '適格'],
            ['11/30', '1817', '', '旅費交通費', '', '', '通勤定期代 城西バス', '課対仕入10%', '', '56,800', '154,033,125', '適格'],
            ['11/30', '1820', '', '[製]地代家賃', '', '工房', '11月分', '課対仕入10%', '', '115,000', '153,918,125', '適格'],
            ['11/30', '1824', '', '売上高', '', 'ショップ', '本日売上', '課税売上10%', '171,077', '', '154,089,202', ''],
            ['11/30', '1825', '', '[製]旅費交通費', '', '工房', '通勤定期代', '課対仕入10%', '', '7,800', '154,081,402', '適格'],
            ['11/30', '1827', '[振伝]', '売掛金', 'L.Sリビング　大分店', '', 'L001L.Sリビング大分', '', '62,100', '', '154,143,502', ''],
            ['11/30', '1830', '[振伝]', '売掛金', '大津商会', '', 'O001大津商会', '', '319,551', '', '154,463,053', ''],
            ['11/30', '1856', '[振伝]', '売掛金', 'ﾜｰｸｼｮｯﾌﾟ鈴鹿', '', 'W001ﾜｰｸｼｮｯﾌﾟ鈴鹿', '', '10,170', '', '154,473,223', ''],
            ['', '1862', '', '', '', '', '', '', '', '', '', '']
        ];
        const check = '<svg class="mx-auto mt-[8px] h-[9px] w-3" viewBox="0 0 12 9"><path d="M.5 3.5l4 4 7-7" fill="none" stroke="#000" shape-rendering="crispEdges"/></svg>';
        const cellBase = '[&_td]:h-[18px] [&_td]:border-r [&_td]:border-b [&_td]:border-r-[#d9a093] [&_td]:border-b-[#c9c4b6] [&_td]:py-0 [&_td]:pr-[2px] [&_td]:pl-[3px] [&_td]:leading-[17px] [&_td:last-child]:border-r-0 ';
        const lastRow = '[&>tr:last-child>td]:border-b-[#a5a297] [&_td[rowspan]]:border-b-[#a5a297] ';
        const editor = '<div class="flex h-[17px] bg-[#ffffb0]"><input aria-label="日付" value="0331" class="h-4 w-7 bg-[#0078d7] leading-4 text-white outline-none"><button aria-label="日付を選択" class="ml-auto flex w-3 items-center justify-center border border-t-white border-r-[#696969] border-b-[#696969] border-l-white bg-[#f0f0f0]"><svg class="h-[2px] w-1" viewBox="0 0 4 2"><path d="M0 0h4L2 2z"/></svg></button></div>';

        const table = document.querySelector('table');
        rows.forEach((r, i) => {
            const [date, no, type, acc, sub, dept, memo, tax, debit, credit, total, inv] = r;
            const current = i === rows.length - 1;
            const body = document.createElement('tbody');
            body.className = cellBase + lastRow + (i % 2 ? 'bg-[#fdf3e2]' : 'bg-[#fffcee]') + (current ? ' outline-1 -outline-offset-1 outline-black' : '');
            const dateCell = current ? '<td class="p-0!">' + editor + '</td>' : `<td class="text-right">${date}</td>`;
            body.innerHTML = `
                <tr><td rowspan="3" class="${type ? 'bg-[#c2dcc6]' : 'bg-[#f0f0f0]'}"></td><td></td><td></td>${dateCell}<td colspan="2" class="text-center">${type}</td><td rowspan="3"></td>
                    <td>${acc}</td><td colspan="5">${memo}</td><td class="text-right">${debit}</td><td class="text-right">${credit}</td><td class="text-right">${total}</td><td>${inv}</td><td></td></tr>
                <tr><td></td><td></td><td class="text-right">${no}</td><td></td><td></td>
                    <td>${sub}</td><td></td><td>${tax}</td><td>${tax ? '内税' : ''}</td><td></td><td></td><td></td><td></td><td></td><td>${inv ? '100%' : ''}</td><td>${current ? '' : check}</td></tr>
                <tr><td></td><td></td><td></td><td colspan="2"></td>
                    <td>${dept}</td><td></td><td colspan="2"></td><td colspan="2"></td><td></td><td></td><td></td><td></td><td></td></tr>`;
            table.appendChild(body);
        });

        // Registro vacío cortado por el borde inferior
        const tail = document.createElement('tbody');
        tail.className = cellBase + 'bg-[#fdf3e2]';
        tail.innerHTML = `
            <tr><td rowspan="2" class="border-b-0!"></td><td></td><td></td><td></td><td colspan="2"></td><td rowspan="2" class="border-b-0!"></td><td></td><td colspan="5"></td><td></td><td></td><td></td><td></td><td></td></tr>
            <tr class="[&>td]:h-[10px]! [&>td]:border-b-0!"><td></td><td></td><td></td><td></td><td></td><td></td><td></td><td></td><td></td><td></td><td></td><td></td><td></td><td></td><td></td><td></td></tr>`;
        table.appendChild(tail);
    </script>
</body>
</html>
